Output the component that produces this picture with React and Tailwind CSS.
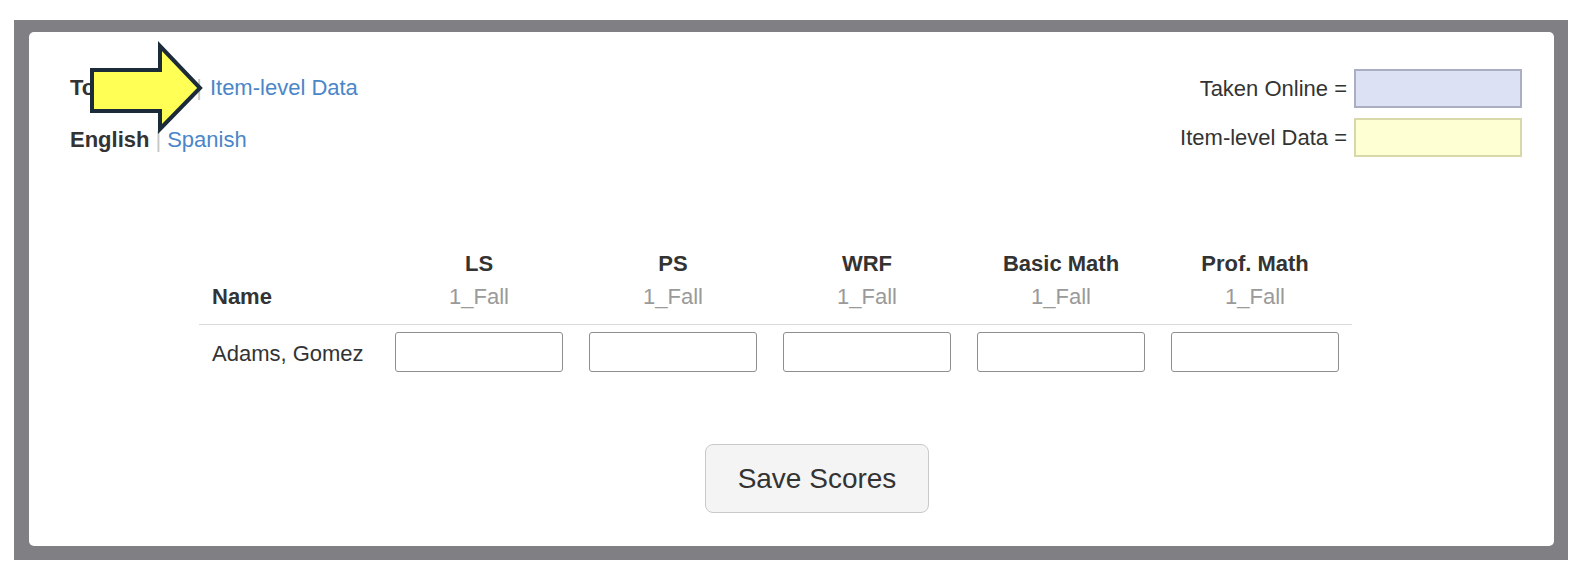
import React from 'react';

const columns = ['LS', 'PS', 'WRF', 'Basic Math', 'Prof. Math'];

const Arrow = () => (
  <svg
    className="absolute left-[56px] top-[8px]"
    width="125"
    height="95"
    viewBox="0 0 125 95"
  >
    <polygon
      points="7,30 75,30 75,6 115,48 75,89 75,71 7,71"
      fill="#ffff55"
      stroke="#1c2b39"
      strokeWidth="4"
      strokeLinejoin="miter"
    />
  </svg>
);

const App = () => {
  return (
    <div className="w-[1584px] h-[580px] bg-white pt-[20px] pl-[14px] font-['Liberation_Sans',Arial,sans-serif] text-[#333]">
      <div className="w-[1554px] h-[540px] bg-[#7f7f84] pt-[12px] pl-[15px] pr-[14px] pb-[14px]">
        <div className="relative h-full bg-white rounded-[5px] pl-[41px] pr-[32px] pt-[37px]">
          {/* top links + legend */}
          <div className="flex justify-between items-start">
            <div className="mt-[6px] text-[22px] leading-[26px]">
              <div className="flex items-center">
                <span className="font-bold">Total Score</span>
                <span className="text-[#c8c8c8] mx-[8px]">|</span>
                <a className="text-[#4a86c8]">Item-level Data</a>
              </div>
              <div className="flex items-center mt-[26px]">
                <span className="font-bold">English</span>
                <span className="text-[#c8c8c8] mx-[6px]">|</span>
                <a className="text-[#4a86c8]">Spanish</a>
              </div>
            </div>
            <div className="text-[22px] leading-[26px]">
              <div className="flex items-center justify-end gap-[7px]">
                <span>Taken Online =</span>
                <div className="w-[168px] h-[39px] bg-[#dce1f3] border-2 border-[#a9aec2]" />
              </div>
              <div className="flex items-center justify-end gap-[7px] mt-[10px]">
                <span>Item-level Data =</span>
                <div className="w-[168px] h-[39px] bg-[#ffffd4] border-2 border-[#d8d8aa]" />
              </div>
            </div>
          </div>

          {/* score table */}
          <div className="ml-[129px] mt-[90px] w-[1153px] text-[22px]">
            <div className="grid grid-cols-[183px_repeat(5,194px)] border-b border-[#d9d9d9] pb-[11px]">
              <div className="self-end pl-[13px] font-bold leading-[33px]">Name</div>
              {columns.map((col) => (
                <div key={col} className="text-center leading-[33px]">
                  <div className="font-bold">{col}</div>
                  <div className="text-[#9a9a9a]">1_Fall</div>
                </div>
              ))}
            </div>
            <div className="grid grid-cols-[183px_repeat(5,194px)] items-center pt-[7px]">
              <div className="pl-[13px] leading-[26px] mt-[3px]">Adams, Gomez</div>
              {columns.map((col) => (
                <div key={col} className="flex justify-center">
                  <input
                    type="text"
                    className="w-[168px] h-[40px] border border-[#8e8e8e] rounded-[3px] bg-white outline-none"
                  />
                </div>
              ))}
            </div>
          </div>

          <div className="ml-[635px] mt-[72px]">
            <button className="w-[224px] h-[69px] bg-[#f4f4f4] border border-[#c9c9c9] rounded-[8px] text-[28px] text-[#333]">
              Save Scores
            </button>
          </div>

          <Arrow />
        </div>
      </div>
    </div>
  );
};

export default App;
